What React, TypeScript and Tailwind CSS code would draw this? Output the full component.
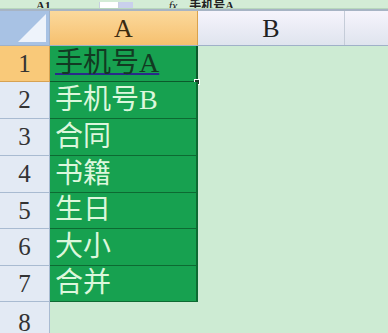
import React from 'react'

const rows = [
  { n: '1', text: '手机号A', h: 'h-[36px]' },
  { n: '2', text: '手机号B', h: 'h-[37px]' },
  { n: '3', text: '合同', h: 'h-[37px]' },
  { n: '4', text: '书籍', h: 'h-[37px]' },
  { n: '5', text: '生日', h: 'h-[36px]' },
  { n: '6', text: '大小', h: 'h-[37px]' },
  { n: '7', text: '合并', h: 'h-[36px]' },
]

const serif = { fontFamily: '"Liberation Serif", "Times New Roman", serif' }
const cjk = { fontFamily: '"Liberation Serif", "Noto Sans CJK SC", serif' }

export default function App() {
  return (
    <div className="w-[388px] h-[333px] overflow-hidden bg-[#cdebd3] flex flex-col">
      {/* formula bar remnant */}
      <div className="h-[9px] shrink-0 overflow-hidden bg-[#d3ecd6] border-b border-[#b8d7bd] relative">
        <div className="flex items-end h-[9px] text-[12px] leading-none text-[#222]" style={cjk}>
          <span className="ml-[36px] mb-[-3px] font-bold">A1</span>
          <span className="ml-[48px] w-[20px] h-[9px] bg-white border-x border-[#c8cfe0] mb-[-2px]" />
          <span className="w-[14px] h-[9px] bg-[#c9d0ec] mb-[-2px]" />
          <span className="ml-[36px] mb-[-3px] italic">fx</span>
          <span className="ml-[12px] mb-[-3px] font-bold">手机号A</span>
        </div>
      </div>
      <div className="h-[2px] shrink-0 bg-[#a7b4c4]" />
      {/* column headers */}
      <div className="flex h-[35px] shrink-0 border-b border-[#9fb1c8]">
        <div className="w-[50px] relative bg-[#a8c2e4] border-r border-[#9fb1c8]">
          <svg className="absolute right-[3px] bottom-[3px]" width="28" height="28" viewBox="0 0 28 28">
            <polygon points="28,0 28,28 0,28" fill="#eef3fb" />
          </svg>
        </div>
        <div
          className="w-[148px] flex items-center justify-center bg-gradient-to-b from-[#fbd99c] to-[#f6c06e] border-r border-[#d9a24c] text-[26px] text-[#3b2a10]"
          style={serif}
        >
          A
        </div>
        <div
          className="w-[147px] flex items-center justify-center bg-gradient-to-b from-[#f6f4fc] to-[#dfe4ee] border-r border-[#c5ccd8] text-[26px] text-[#222]"
          style={serif}
        >
          B
        </div>
        <div className="flex-1 bg-gradient-to-b from-[#f6f4fc] to-[#dfe4ee]" />
      </div>
      {/* rows */}
      {rows.map((r, i) => (
        <div key={r.n} className={`flex shrink-0 ${r.h}`}>
          <div
            className={`w-[50px] flex items-center justify-center border-r border-b text-[25px] text-[#333] ${
              i === 0 ? 'bg-[#f9c979] border-[#d7a252]' : 'bg-[#e3eaf4] border-[#a9bbd1]'
            }`}
            style={serif}
          >
            {r.n}
          </div>
          <div
            className={`w-[148px] relative flex items-end pl-[5px] pb-[1px] bg-[#17a150] border-r-2 border-b ${
              i === 0 ? 'border-[#0b5a2b]' : 'border-[#0d6a32]'
            }`}
          >
            <span
              className={`text-[28px] leading-[34px] ${
                i === 0 ? 'text-[#123a22] underline decoration-[#2a2a8a] decoration-2 underline-offset-[1px]' : 'text-[#dcf7dc]'
              }`}
              style={cjk}
            >
              {r.text}
            </span>
            {i === 0 && (
              <div className="absolute right-[-4px] bottom-[-4px] w-[6px] h-[6px] bg-[#1d3a28] border border-white" />
            )}
          </div>
          <div className="flex-1" />
        </div>
      ))}
      <div className="flex flex-1">
        <div className="w-[50px] flex items-start pt-[2px] justify-center bg-[#e3eaf4] border-r border-[#a9bbd1] text-[25px] text-[#333]" style={serif}>
          8
        </div>
        <div className="flex-1" />
      </div>
    </div>
  )
}
